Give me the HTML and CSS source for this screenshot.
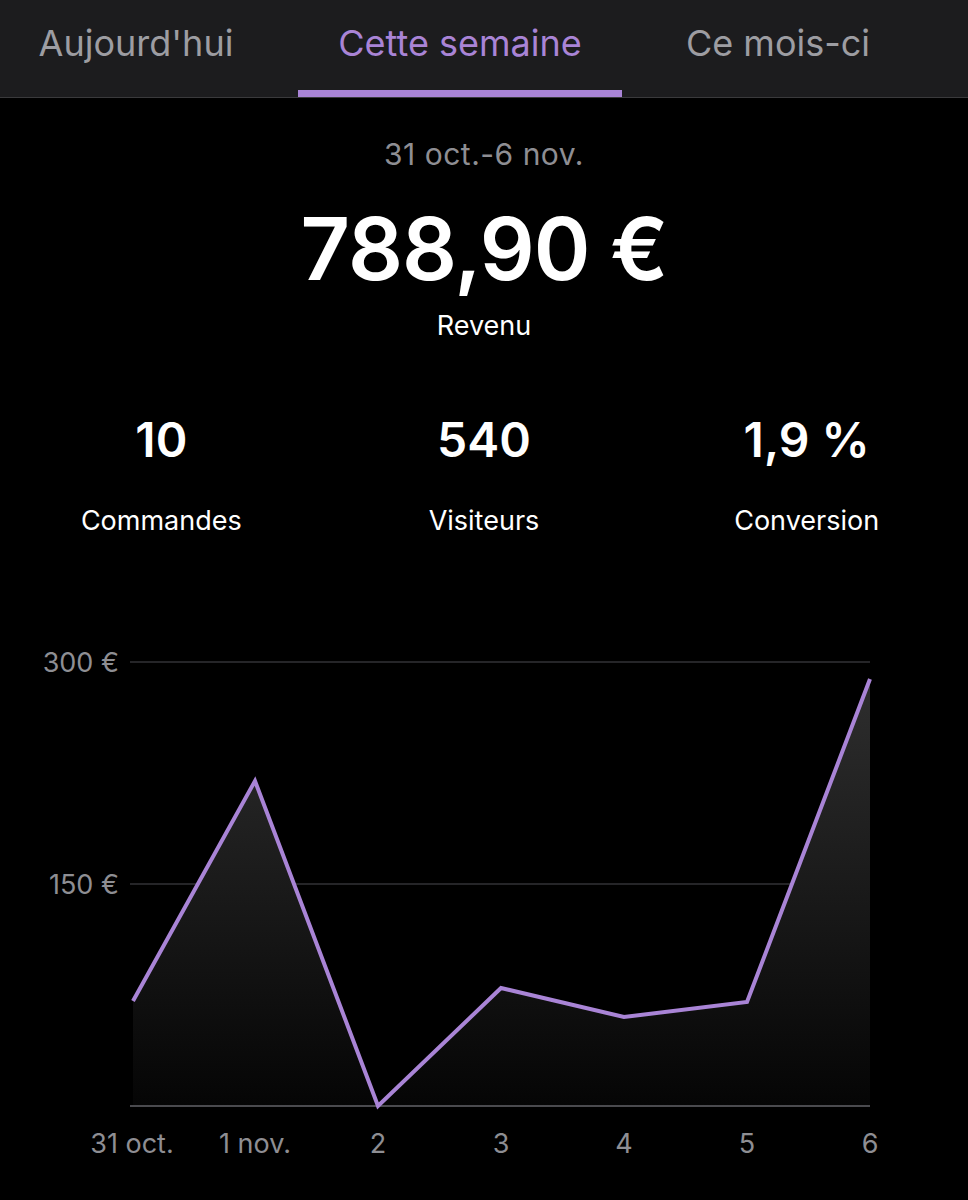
FILE: index.html
```html
<!DOCTYPE html>
<html>
<head>
    <title>Statistiques</title>
    <link rel="stylesheet" href="styles.css">
</head>
<body>
    <nav class="tabs">
        <div class="tab">Aujourd'hui</div>
        <div class="tab active">Cette semaine</div>
        <div class="tab">Ce mois-ci</div>
    </nav>

    <section class="summary">
        <div class="period">31 oct.-6 nov.</div>
        <div class="total">788,90 €</div>
        <div class="total-label">Revenu</div>
    </section>

    <section class="stats">
        <div class="stat">
            <div class="stat-value">10</div>
            <div class="stat-label">Commandes</div>
        </div>
        <div class="stat">
            <div class="stat-value">540</div>
            <div class="stat-label">Visiteurs</div>
        </div>
        <div class="stat">
            <div class="stat-value">1,9 %</div>
            <div class="stat-label">Conversion</div>
        </div>
    </section>

    <section class="chart">
        <svg width="968" height="540" viewBox="0 0 968 540">
            <defs>
                <linearGradient id="area" x1="0" y1="38" x2="0" y2="465" gradientUnits="userSpaceOnUse">
                    <stop offset="0" stop-color="#2e2e2e"/>
                    <stop offset="1" stop-color="#050505"/>
                </linearGradient>
            </defs>
            <!-- grid -->
            <line class="grid" x1="130" y1="21" x2="870" y2="21"/>
            <line class="grid" x1="130" y1="243" x2="870" y2="243"/>
            <text class="axis" x="119" y="31" text-anchor="end">300 €</text>
            <text class="axis" x="119" y="253" text-anchor="end">150 €</text>

            <!-- data -->
            <path d="M133,360 L255,140 L378,465 L501,347 L624,376 L747,361 L870,38 L870,465 L133,465 Z" fill="url(#area)"/>
            <line class="base" x1="130" y1="465" x2="870" y2="465"/>
            <polyline class="series" points="133,360 255,140 378,465 501,347 624,376 747,361 870,38"/>

            <!-- x labels -->
            <text class="axis" x="132" y="512" text-anchor="middle">31 oct.</text>
            <text class="axis" x="255" y="512" text-anchor="middle">1 nov.</text>
            <text class="axis" x="378" y="512" text-anchor="middle">2</text>
            <text class="axis" x="501" y="512" text-anchor="middle">3</text>
            <text class="axis" x="624" y="512" text-anchor="middle">4</text>
            <text class="axis" x="747" y="512" text-anchor="middle">5</text>
            <text class="axis" x="870" y="512" text-anchor="middle">6</text>
        </svg>
    </section>
</body>
</html>
```

FILE: styles.css
```css
body {
    margin: 0;
    background-color: #000;
    color: #fff;
    font-family: Inter, "Noto Sans", sans-serif;
    overflow: hidden;
}

.tabs {
    display: flex;
    height: 97px;
    background-color: #1c1c1e;
    border-bottom: 1px solid #3a3a3c;
    margin-left: -26px;
}

.tab {
    width: 324px;
    flex-shrink: 0;
    box-sizing: border-box;
    display: flex;
    align-items: center;
    justify-content: center;
    padding-bottom: 5px;
    font-size: 36px;
    color: #9d9da2;
    border-bottom: 7px solid transparent;
}

.tab:last-child {
    width: 312px;
}

.tab.active {
    color: #a984d6;
    border-bottom-color: #a984d6;
}

.summary {
    text-align: center;
    padding-top: 37px;
}

.period {
    font-size: 30px;
    letter-spacing: 0.5px;
    color: #8e8e93;
    line-height: 38px;
}

.total {
    font-size: 86px;
    font-weight: 600;
    line-height: 104px;
    margin-top: 24px;
    letter-spacing: -1px;
}

.total-label {
    font-size: 27px;
    line-height: 34px;
    margin-top: 8px;
}

.stats {
    display: grid;
    grid-template-columns: repeat(3, 1fr);
    margin-top: 68px;
    text-align: center;
}

.stat-value {
    font-size: 48px;
    font-weight: 600;
    line-height: 58px;
}

.stat-label {
    font-size: 27px;
    line-height: 34px;
    margin-top: 35px;
}

.chart {
    margin-top: 103px;
}

.chart svg {
    display: block;
}

.grid {
    stroke: #323236;
    stroke-width: 1.5;
}

.base {
    stroke: #4a4a4e;
    stroke-width: 2;
}

.series {
    fill: none;
    stroke: #a984d6;
    stroke-width: 4;
    stroke-linejoin: miter;
}

.axis {
    font-family: Inter, "Noto Sans", sans-serif;
    font-size: 27px;
    fill: #8e8e93;
}
```
